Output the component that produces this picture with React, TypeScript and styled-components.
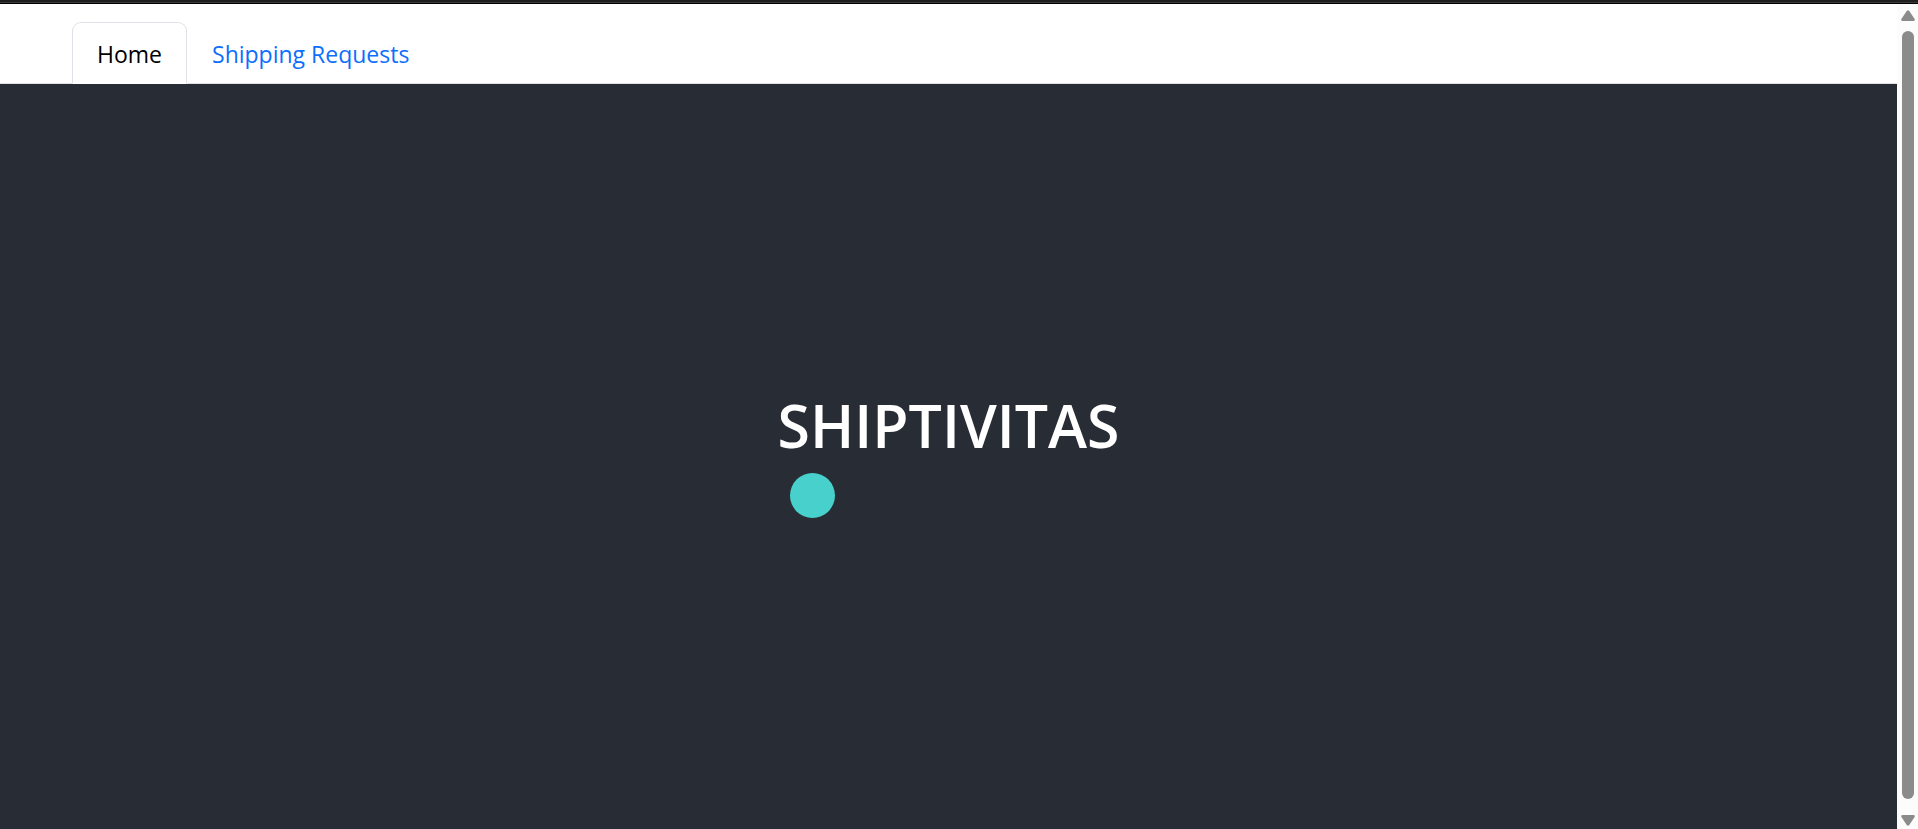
import React, { useState } from "react";
import styled, { createGlobalStyle } from "styled-components";

const GlobalStyle = createGlobalStyle`
  *, *::before, *::after { box-sizing: border-box; }
  body {
    margin: 0;
    overflow: hidden;
    background: #fff;
    color: #212529;
    font-family: "Segoe UI", "Open Sans", "Noto Sans", sans-serif;
    font-size: 23px;
    line-height: 36px;
  }
`;

const Shell = styled.div`
  display: flex;
  flex-direction: column;
  height: 100vh;
`;

const WindowEdge = styled.div`
  flex: none;
  height: 4px;
  background: #1f1f1f;
  border-bottom: 1px solid #000;
  box-shadow: inset 0 -1px #3a3a3a;
`;

const Viewport = styled.div`
  display: flex;
  flex: 1;
  min-height: 0;
`;

const Content = styled.div`
  flex: 1;
  min-width: 0;
  overflow: hidden;
`;

const TabList = styled.nav`
  display: flex;
  padding: 18px 72px 0;
  border-bottom: 1px solid #dee2e6;
`;

const Tab = styled.a<{ $active: boolean }>`
  margin-bottom: -1px;
  padding: 13px 24px 11px;
  border: 1px solid ${({ $active }) => ($active ? "#dee2e6" : "transparent")};
  border-bottom-color: ${({ $active }) => ($active ? "#fff" : "transparent")};
  border-radius: 9px 9px 0 0;
  background: ${({ $active }) => ($active ? "#fff" : "transparent")};
  color: ${({ $active }) => ($active ? "#000" : "#0d6efd")};
  text-decoration: none;
`;

const Hero = styled.main`
  display: flex;
  align-items: center;
  justify-content: center;
  min-height: 100vh;
  background: #282c34;
`;

const Brand = styled.div`
  min-height: 220px;
`;

const Title = styled.h1`
  margin: 0 0 12px;
  color: #fff;
  font-size: 59px;
  font-weight: 600;
  line-height: 72px;
`;

const Dot = styled.div`
  width: 45px;
  height: 45px;
  margin-left: 12px;
  border-radius: 50%;
  background: #48d1cc;
`;

const ScrollTrack = styled.div`
  display: flex;
  flex: none;
  flex-direction: column;
  align-items: center;
  width: 21px;
  padding: 6px 0 3px;
  background: #fcfcfc;
`;

const ScrollThumb = styled.div`
  flex: 1;
  width: 12px;
  margin: 10px 0 16px;
  border-radius: 6px;
  background: #8b8b8b;
`;

const Arrow = styled.svg`
  flex: none;
  width: 14px;
  height: 11px;
  fill: #8b8b8b;
`;

const tabs = ["Home", "Shipping Requests"];

export default function App() {
  const [active, setActive] = useState(tabs[0]);
  return (
    <Shell>
      <GlobalStyle />
      <WindowEdge />
      <Viewport>
        <Content>
          <TabList>
            {tabs.map((name) => (
              <Tab
                key={name}
                href="#"
                $active={name === active}
                aria-current={name === active ? "page" : undefined}
                onClick={(event) => {
                  event.preventDefault();
                  setActive(name);
                }}
              >
                {name}
              </Tab>
            ))}
          </TabList>
          <Hero>
            <Brand>
              <Title>SHIPTIVITAS</Title>
              <Dot />
            </Brand>
          </Hero>
        </Content>
        <ScrollTrack aria-hidden="true">
          <Arrow viewBox="0 0 14 11">
            <path d="M5.7 1Q7-.6 8.3 1L13.6 9Q14.3 11 12.4 11H1.6Q-.3 11 .4 9Z" />
          </Arrow>
          <ScrollThumb />
          <Arrow viewBox="0 0 14 11">
            <path d="M5.7 10Q7 11.600 8.300 10L13.600 2Q14.300 0 12.400 0H1.600Q-.3 0 .4 2Z" />
          </Arrow>
        </ScrollTrack>
      </Viewport>
    </Shell>
  );
}
